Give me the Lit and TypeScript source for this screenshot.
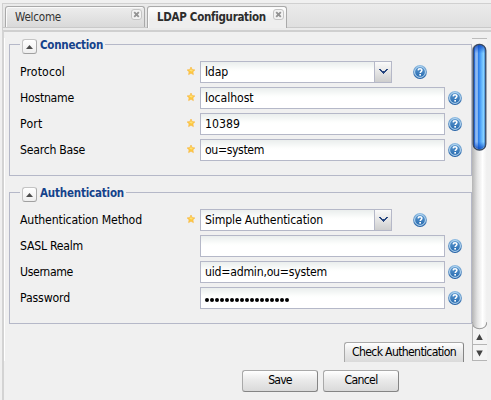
import { LitElement, html, css, svg, nothing } from "lit";
import { customElement, property } from "lit/decorators.js";

interface Field {
  label: string;
  value: string;
  required?: boolean;
  select?: boolean;
  kind?: string;
  w: number;
  vw: number;
}

/** One line of text whose tracking is adjusted to a given advance width. */
@customElement("fit-text")
class FitText extends LitElement {
  @property({ type: Number }) w = 0;
  @property() text = "";
  static styles = css`
    :host { display: inline-block; white-space: pre; }
    span { display: inline-block; }
  `;
  render() {
    return html`<span>${this.text}</span>`;
  }
  updated() {
    const s = this.renderRoot.querySelector("span") as HTMLElement;
    if (!this.w || !this.text) return;
    s.style.letterSpacing = "0px";
    const natural = s.getBoundingClientRect().width;
    s.style.letterSpacing = `${(this.w - natural) / this.text.length}px`;
  }
}

const star = svg`<svg width="10" height="10" viewBox="0 0 10 10">
  <path d="M5 1 6.2 3.6 8.9 3.9 6.9 5.8 7.4 8.6 5 7.3 2.6 8.6 3.1 5.8 1.1 3.9 3.8 3.6Z" fill="#fcc83e" stroke="#f8bb50" stroke-width=".7" stroke-linejoin="round"/>
  <path d="M5 2.4 5.7 4.2 7.2 4.5 5.6 5.4 3 4.5 4.4 4.1Z" fill="#ffe27a"/></svg>`;

const help = svg`<svg width="14" height="14" viewBox="0 0 14 14">
  <defs><linearGradient id="h" x1="0" y1="0" x2="0" y2="1"><stop offset="0" stop-color="#8fbce2"/><stop offset="1" stop-color="#1f5da3"/></linearGradient>
  <linearGradient id="i" x1="0" y1="0" x2="0" y2="1"><stop offset="0" stop-color="#5a97cf"/><stop offset="1" stop-color="#2a6cb0"/></linearGradient></defs>
  <circle cx="7" cy="7" r="6.9" fill="url(#h)"/><circle cx="7" cy="7" r="5.4" fill="url(#i)" stroke="#bcdcf4" stroke-width="1"/>
  <path d="M5.1 5.4C5.2 3.2 8.9 3.2 8.9 5.3 8.9 6.7 7.2 6.5 7.2 8.1" fill="none" stroke="#fff" stroke-width="1.5"/><rect x="6.3" y="9" width="1.7" height="1.6" fill="#fff"/></svg>`;

const cross = svg`<svg width="11" height="11" viewBox="0 0 11 11">
  <rect x=".5" y=".5" width="10" height="10" rx="2.5" fill="#f3f3f3" stroke="#c4c4c4"/>
  <path d="M3.2 3.2 7.8 7.8M7.8 3.2 3.2 7.8" stroke="#939393" stroke-width="1.9"/></svg>`;

@customElement("field-row")
class FieldRow extends LitElement {
  @property({ attribute: false }) field!: Field;
  static styles = css`
    :host { display: flex; height: 22px; margin-bottom: 4px; align-items: center; }
    svg { display: block; }
    .label { width: 166px; height: 18px; line-height: 18px; }
    .mark { width: 14px; height: 12px; }
    .box { box-sizing: border-box; width: 245px; height: 22px; border: 1px solid #b5b8c8; padding-left: 4px; line-height: 21px;
      background: linear-gradient(#eaeeed, #fdfefd 8px, #fff 10px); display: flex; justify-content: space-between; }
    .select { width: 192px; }
    .trigger { width: 16px; border-left: 1px solid #b5b8c8; background: linear-gradient(#fafafa, #e5e5e5 50%, #cecece); display: grid; place-items: center; }
    .trigger svg { margin-bottom: 2px; }
    .help { margin-left: 3px; }
    .far { margin-left: 21px; }
    .password { display: flex; align-items: center; }
    .dots { display: flex; gap: 1px; padding-top: 3px; }
    .dot { width: 4px; height: 4px; border-radius: 2px; background: #000; }
  `;
  render() {
    const f = this.field;
    return html`
      <div class="label"><fit-text .w=${f.w} .text=${f.label}></fit-text></div>
      <div class="mark">${f.required ? star : nothing}</div>
      <div class="box ${f.select ? "select" : ""} ${f.kind ?? ""}">
        ${f.kind === "password"
          ? html`<span class="dots">${Array.from({ length: 17 }, () => html`<i class="dot"></i>`)}</span>`
          : html`<fit-text .w=${f.vw} .text=${f.value}></fit-text>`}
        ${f.select
          ? html`<span class="trigger"><svg width="9" height="5" viewBox="0 0 9 5" shape-rendering="crispEdges"><path d="M0 0H2V1H3V2H6V1H7V0H9V1H8V2H7V3H6V4H5V5H4V4H3V3H2V2H1V1H0Z" fill="#274680"/></svg></span>`
          : nothing}
      </div>
      <div class="help ${f.select ? "far" : ""}">${help}</div>`;
  }
}

@customElement("field-group")
class FieldGroup extends LitElement {
  @property() heading = "";
  @property({ type: Number }) w = 0;
  @property({ attribute: false }) fields: Field[] = [];
  static styles = css`
    :host { display: block; width: 463px; height: 137px; }
    .head { display: flex; align-items: center; height: 15px; }
    .l, .r { box-sizing: border-box; height: 10px; border-top: 1px solid #b5b8c8; align-self: flex-end; }
    .l { width: 11px; border-left: 1px solid #b5b8c8; }
    .r { flex: 1; border-right: 1px solid #b5b8c8; }
    .toggle { box-sizing: border-box; width: 15px; height: 15px; margin: 0 3px 0 2px; border: 1px solid #bbb; border-color: #c4c4c4 #aaa #a0a0a0 #c4c4c4; border-radius: 3px;
      background: linear-gradient(#fff, #eee); display: grid; place-items: center; }
    .title { font-weight: bold; font-size: 11.5px; color: #15428b; padding-right: 2px; line-height: 15px; height: 17px; }
    .body { box-sizing: border-box; height: 122px; border: 1px solid #b5b8c8; border-top: 0; padding: 7px 0 0 10px; }
    svg { display: block; }
  `;
  render() {
    return html`
      <div class="head">
        <span class="l"></span>
        <span class="toggle"><svg width="7" height="4"><path d="M0 4 3.5 0 7 4Z" fill="#4c4c4c"/></svg></span>
        <span class="title"><fit-text .w=${this.w} .text=${this.heading}></fit-text></span>
        <span class="r"></span>
      </div>
      <div class="body">${this.fields.map((f) => html`<field-row .field=${f}></field-row>`)}</div>`;
  }
}

const connection: Field[] = [
  { label: "Protocol", w: 45, value: "ldap", vw: 23, required: true, select: true },
  { label: "Hostname", w: 54, value: "localhost", vw: 48.5, required: true },
  { label: "Port", w: 22.5, value: "10389", vw: 35, required: true },
  { label: "Search Base", w: 65, value: "ou=system", vw: 59, required: true },
];
const authentication: Field[] = [
  { label: "Authentication Method", w: 122, value: "Simple Authentication", vw: 118, required: true, select: true },
  { label: "SASL Realm", w: 63, value: "", vw: 0 },
  { label: "Username", w: 53, value: "uid=admin,ou=system", vw: 122 },
  { label: "Password", w: 50, value: "", vw: 0, kind: "password" },
];

@customElement("app-root")
class AppRoot extends LitElement {
  static styles = css`
    :host { display: block; width: 491px; height: 400px; overflow: hidden; background: #f0f0f0; color: #000;
      font: 12.2px "DejaVu Sans Condensed", "DejaVu Sans", sans-serif; font-stretch: condensed; }
    svg { display: block; }
    .window { box-sizing: border-box; height: 400px; padding-top: 3px; margin-left: 2px; }
    .tabs { box-sizing: border-box; height: 25px; border-top: 1px solid #d0d0d0; border-left: 1px solid #d0d0d0; border-bottom: 1px solid #c9c9c9;
      background: linear-gradient(#ebebeb, #dfdfdf); padding: 2px 0 0 2px; display: flex; gap: 2px; }
    .tab { box-sizing: border-box; width: 140px; height: 21px; border: 1px solid #a9a9a9; border-bottom: 0; border-radius: 3px 3px 0 0;
      background: linear-gradient(#ededed, #d9d9d9); box-shadow: inset 1px 1px #fafafa; display: flex; justify-content: space-between; padding: 2px 2px 0 9px;
      font-size: 11.6px; line-height: 16px; color: #333; }
    .active { height: 22px; background: linear-gradient(#fff, #eee 60%); font-weight: bold; font-size: 11.5px; color: #2c2c2c; }
    .strip { height: 2px; background: #ebebeb; border-left: 1px solid #d0d0d0; }
    .content { box-sizing: border-box; height: 370px; border-top: 2px solid #cfcfcf; border-left: 2px solid #d3d3d3; padding-top: 6px; }
    .upper { display: flex; height: 323px; border-left: 1px solid #fff; }
    .form { width: 463px; padding: 1px 0 0 4px; }
    .gap { height: 11px; }
    .check { display: flex; justify-content: flex-end; padding: 18px 8px 0 0; }
    .btn { box-sizing: border-box; width: 76px; height: 22px; border: 1px solid #a9a9a9; border-right-color: #858585; border-bottom-color: #858585;
      border-radius: 3px; background: linear-gradient(#fff, #ececec 40%, #dadada); display: flex; justify-content: center; line-height: 19px; }
    .wide { width: 120px; height: 20px; border-bottom: 0; border-radius: 3px 3px 0 0; }
    .scroll { width: 15px; }
    .actions { display: flex; gap: 5px; padding: 9px 0 0 238px; }
  `;
  render() {
    return html`
      <div class="window">
        <div class="tabs">
          <div class="tab"><fit-text .w=${46} .text=${"Welcome"}></fit-text>${cross}</div>
          <div class="tab active"><fit-text .w=${108.5} .text=${"LDAP Configuration"}></fit-text>${cross}</div>
        </div>
        <div class="strip"></div>
        <div class="content">
          <div class="upper">
            <div class="form">
              <field-group heading="Connection" .w=${63} .fields=${connection}></field-group>
              <div class="gap"></div>
              <field-group heading="Authentication" .w=${84} .fields=${authentication}></field-group>
              <div class="check"><div class="btn wide"><fit-text .w=${104} .text=${"Check Authentication"}></fit-text></div></div>
            </div>
            <div class="scroll">
              <svg width="15" height="323" viewBox="0 0 15 323">
                <defs>
                  <linearGradient id="t"><stop offset="0" stop-color="#b4b4b4"/><stop offset=".35" stop-color="#e2e2e2"/><stop offset=".7" stop-color="#fff"/><stop offset="1" stop-color="#efefef"/></linearGradient>
                  <linearGradient id="b"><stop offset="0" stop-color="#123f9c"/><stop offset=".12" stop-color="#2c6fda"/><stop offset=".2" stop-color="#96bff4"/><stop offset=".36" stop-color="#82b3f3"/><stop offset=".42" stop-color="#2d7eea"/><stop offset=".62" stop-color="#58adfc"/><stop offset=".82" stop-color="#87d2ff"/><stop offset="1" stop-color="#2263b8"/></linearGradient>
                  <linearGradient id="v" x1="0" y1="0" x2="0" y2="1"><stop offset="0" stop-color="#0a3fba" stop-opacity=".8"/><stop offset=".08" stop-color="#0a50d0" stop-opacity="0"/><stop offset=".93" stop-color="#0a50d0" stop-opacity="0"/><stop offset="1" stop-color="#0940b4" stop-opacity=".8"/></linearGradient>
                </defs>
                <rect width="15" height="323" fill="url(#t)"/>
                <path d="M0 0H15V11C14 4 1 4 0 11Z" fill="#f3f3f3"/><path d="M0 .5H15" stroke="#bcbcbc"/>
                <rect x="1.2" y="6.5" width="12.6" height="105.5" rx="6" fill="url(#b)" stroke="#3a4961" stroke-width="1.3"/>
                <rect x="2" y="7" width="11" height="104" rx="5.5" fill="url(#v)"/>
                <path d="M0 284C1 293 14 293 15 284V323H0Z" fill="#f4f4f4"/><path d="M0 284C1 293 14 293 15 284" fill="none" stroke="#999" stroke-width="1.2"/>
                <path d="M.5 285V323M0 306.5H15M0 322.5H15" stroke="#b5b5b5"/>
                <path d="M4.2 302 7.5 296 10.8 302ZM4.2 312.5H10.8L7.5 318.5Z" fill="#444"/>
              </svg>
            </div>
          </div>
          <div class="actions">
            <div class="btn"><fit-text .w=${23.5} .text=${"Save"}></fit-text></div>
            <div class="btn"><fit-text .w=${33} .text=${"Cancel"}></fit-text></div>
          </div>
        </div>
      </div>`;
  }
}
